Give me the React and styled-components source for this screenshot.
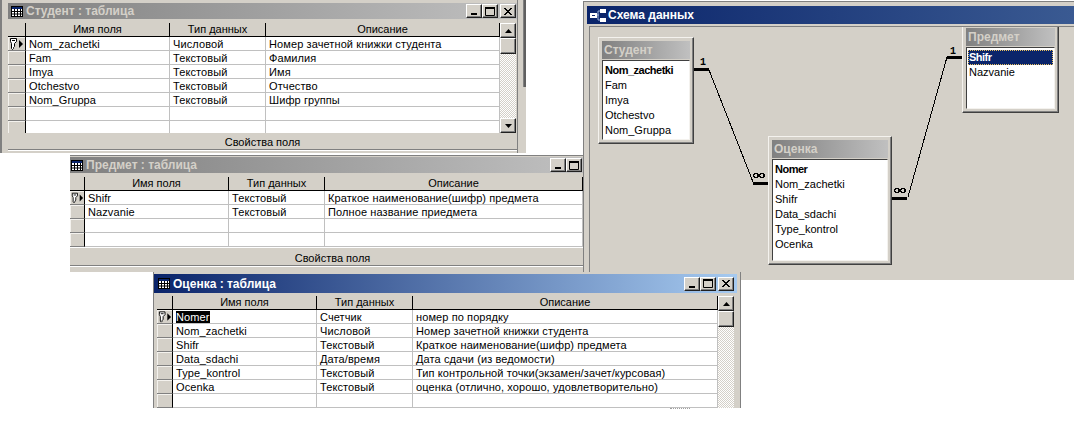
import styled, { createGlobalStyle } from "styled-components";

const GlobalStyle = createGlobalStyle`
  html, body {
    margin: 0;
    padding: 0;
    background: #fff;
  }
  body {
    width: 1074px;
    height: 425px;
    overflow: hidden;
    font-family: "Liberation Sans", Arial, sans-serif;
    font-size: 11px;
    color: #000;
  }
`;

const FACE = "#d4d0c8";

const student = [
  ["Nom_zachetki", "Числовой", "Номер зачетной книжки студента"],
  ["Fam", "Текстовый", "Фамилия"],
  ["Imya", "Текстовый", "Имя"],
  ["Otchestvo", "Текстовый", "Отчество"],
  ["Nom_Gruppa", "Текстовый", "Шифр группы"],
  ["", "", ""],
  ["", "", ""],
];

const predmet = [
  ["Shifr", "Текстовый", "Краткое наименование(шифр) предмета"],
  ["Nazvanie", "Текстовый", "Полное название приедмета"],
  ["", "", ""],
  ["", "", ""],
];

const ocenka = [
  ["Nomer", "Счетчик", "номер по порядку"],
  ["Nom_zachetki", "Числовой", "Номер зачетной книжки студента"],
  ["Shifr", "Текстовый", "Краткое наименование(шифр) предмета"],
  ["Data_sdachi", "Дата/время", "Дата сдачи (из ведомости)"],
  ["Type_kontrol", "Текстовый", "Тип контрольной точки(экзамен/зачет/курсовая)"],
  ["Ocenka", "Текстовый", "оценка (отлично, хорошо, удовлетворительно)"],
  ["", "", ""],
];

const Desktop = styled.div`
  position: relative;
  width: 1074px;
  height: 425px;
  overflow: hidden;
  background: #fff;
`;

const Window = styled.div`
  position: absolute;
  left: ${(p) => p.$x}px;
  top: ${(p) => p.$y}px;
  width: ${(p) => p.$w}px;
  height: ${(p) => p.$h}px;
  box-sizing: border-box;
  padding: ${(p) => p.$pad};
  background: ${FACE};
  border: 0 solid #808080;
  border-width: ${(p) => p.$edge || "0"};
  display: flex;
  flex-direction: column;
  overflow: hidden;
  z-index: ${(p) => p.$z};
`;

const TitleBar = styled.div`
  height: ${(p) => p.$h}px;
  flex: none;
  display: flex;
  align-items: center;
  padding-left: ${(p) => p.$left}px;
  gap: 3px;
  background: ${(p) =>
    p.$active
      ? "linear-gradient(90deg, #0a246a, #a6caf0)"
      : "linear-gradient(90deg, #808080, #c0c0c0)"};
`;

const TitleText = styled.span`
  flex: 1;
  font-weight: bold;
  font-size: 12px;
  white-space: nowrap;
  color: ${(p) => (p.$active ? "#fff" : FACE)};
`;

const CaptionButton = styled.div`
  width: 16px;
  height: 14px;
  flex: none;
  box-sizing: border-box;
  background: ${FACE};
  border: 1px solid;
  border-color: #fff #202020 #202020 #fff;
  box-shadow: inset -1px -1px #808080;
  display: flex;
  align-items: center;
  justify-content: center;
`;

const Buttons = styled.div`
  display: flex;
  flex: none;
  margin-right: ${(p) => p.$right}px;
`;

const CloseButton = styled(CaptionButton)`
  margin-left: 2px;
`;

const GridArea = styled.div`
  display: flex;
  flex: none;
  margin: ${(p) => p.$top}px ${(p) => p.$right || 0}px 0 ${(p) => p.$left || 0}px;
  height: ${(p) => p.$h}px;
  overflow: hidden;
`;

const Sheet = styled.div`
  flex: 1;
  min-width: 0;
  background: #fff;
  overflow: hidden;
`;

const Row = styled.div`
  display: grid;
  grid-template-columns: ${(p) => p.$cols};
  height: 14px;
`;

const HeaderCell = styled.div`
  box-sizing: border-box;
  background: ${FACE};
  border-right: 1px solid #000;
  border-bottom: 1px solid #000;
  text-align: center;
  line-height: 13px;
  white-space: nowrap;
  overflow: hidden;
`;

const Selector = styled.div`
  box-sizing: border-box;
  background: ${FACE};
  border-right: 1px solid #000;
  border-bottom: 1px solid #808080;
  box-shadow: inset 1px 1px #f4f2ee;
  display: flex;
  align-items: center;
  justify-content: flex-start;
  padding-left: 1px;
`;

const Cell = styled.div`
  box-sizing: border-box;
  background: #fff;
  border-right: 1px solid #c0c0c0;
  border-bottom: 1px solid #c0c0c0;
  padding-left: 3px;
  line-height: 15px;
  letter-spacing: 0.1px;
  white-space: nowrap;
  overflow: hidden;
`;

const Picked = styled.span`
  background: #000;
  color: #fff;
`;

const Scrollbar = styled.div`
  width: 16px;
  flex: none;
  display: flex;
  flex-direction: column;
`;

const ScrollButton = styled.div`
  height: 15px;
  flex: none;
  box-sizing: border-box;
  background: ${FACE};
  border: 1px solid;
  border-color: #fff #202020 #202020 #fff;
  box-shadow: inset -1px -1px #808080;
  display: flex;
  align-items: center;
  justify-content: center;
`;

const Thumb = styled(ScrollButton)`
  height: 16px;
`;

const Track = styled.div`
  flex: 1;
  background: repeating-conic-gradient(#d4d0c8 0 25%, #fff 0 50%) 0 0 / 2px 2px;
`;

const PropsBand = styled.div`
  height: 15px;
  flex: none;
  margin-top: ${(p) => p.$top}px;
  padding-left: ${(p) => p.$shift || 0}px;
  border-bottom: 1px solid #808080;
  box-shadow: 0 1px #fff;
  text-align: center;
  line-height: 17px;
`;

const SchemaTitle = styled.div`
  height: 18px;
  margin-top: 4px;
  flex: none;
  display: flex;
  align-items: center;
  gap: 2px;
  padding-left: 3px;
  background: linear-gradient(90deg, #0a246a, #3a5a92);
`;

const Canvas = styled.div`
  position: relative;
  flex: 1;
  margin: 2px 0 0 2px;
  border-top: 1px solid #808080;
  border-left: 1px solid #808080;
  overflow: hidden;
`;

const Relations = styled.svg`
  position: absolute;
  left: 0;
  top: 0;
  width: 100%;
  height: 100%;
`;

const TableCard = styled.div`
  position: absolute;
  left: ${(p) => p.$x}px;
  top: ${(p) => p.$y}px;
  width: ${(p) => p.$w}px;
  height: ${(p) => p.$h}px;
  box-sizing: border-box;
  padding: 3px;
  background: ${FACE};
  border: 1px solid;
  border-color: #f4f2ee #404040 #404040 #f4f2ee;
  box-shadow: inset -1px -1px #808080;
  display: flex;
  flex-direction: column;
`;

const CardTitle = styled.div`
  height: 18px;
  flex: none;
  padding-left: 2px;
  font-weight: bold;
  font-size: 12px;
  line-height: 18px;
  color: ${FACE};
  background: linear-gradient(90deg, #808080, #c0c0c0);
`;

const FieldList = styled.div`
  flex: 1;
  margin-top: 1px;
  background: #fff;
  border: 1px solid;
  border-color: #404040 #f4f2ee #f4f2ee #404040;
  padding: 2px 1px 0;
`;

const Field = styled.div`
  height: 15px;
  line-height: 15px;
  padding-left: 1px;
  white-space: nowrap;
  font-weight: ${(p) => (p.$pk ? "bold" : "normal")};
  letter-spacing: ${(p) => (p.$pk ? "-0.5px" : "0")};
  background: ${(p) => (p.$picked ? "#0a246a" : "transparent")};
  color: ${(p) => (p.$picked ? "#fff" : "#000")};
  ${(p) => (p.$picked ? "outline: 1px dotted #e8c060; outline-offset: -1px;" : "")}
`;

const Remnant = styled.div`
  position: absolute;
  left: 518px;
  top: 0;
  width: 8px;
  height: 153px;
  background: ${FACE};
  display: flex;
  justify-content: flex-end;
  align-items: flex-start;
`;

const DarkEdge = styled.div`
  width: 3px;
  height: 87px;
  box-sizing: border-box;
  background: #606060;
  border-left: 1px solid #808080;
`;

const Dots = styled.div`
  position: absolute;
  left: 670px;
  top: 408px;
  width: 20px;
  border-top: 1px dotted #a0a0a0;
`;

const TableIcon = () => (
  <svg width="12" height="11" viewBox="0 0 12 11">
    <rect x="0.5" y="0.5" width="11" height="10" fill="#fff" stroke="#000" />
    <rect x="1" y="1" width="10" height="2" fill="#0a246a" />
    <path d="M3.5 3v7M6.5 3v7M9.5 3v7M1 5.5h10M1 8h10" stroke="#000" strokeWidth="1" />
  </svg>
);

const SchemaIcon = () => (
  <svg width="16" height="14" viewBox="0 0 16 14">
    <rect x="0" y="5" width="7" height="5" fill="#fff" />
    <rect x="2" y="7" width="3" height="1" fill="#0a246a" />
    <rect x="10" y="1" width="6" height="4" fill="#fff" />
    <rect x="10" y="10" width="6" height="4" fill="#fff" />
    <path d="M7 7h2M8 3v9M8 3h2M8 12h2" stroke="#9fb4d8" fill="none" />
  </svg>
);

const KeyMark = () => (
  <svg width="15" height="12" viewBox="0 0 15 12">
    <path
      d="M1.5 0.5h6v3l-2 2v3l-1 1v1l-1 1-1-1v-5l-1-2z"
      fill="#fff"
      stroke="#000"
    />
    <rect x="3" y="2" width="3" height="1" fill="#000" />
    <path d="M10 2l4 4-4 4z" fill="#000" />
  </svg>
);

const MinGlyph = () => (
  <svg width="8" height="8" viewBox="0 0 8 8">
    <rect x="1" y="6" width="6" height="2" fill="#000" />
  </svg>
);

const MaxGlyph = () => (
  <svg width="10" height="9" viewBox="0 0 10 9">
    <path d="M0.5 1.5h9v7h-9z" fill="none" stroke="#000" />
    <rect x="0" y="0" width="10" height="2" fill="#000" />
  </svg>
);

const CloseGlyph = () => (
  <svg width="8" height="7" viewBox="0 0 8 7">
    <path d="M0 0l7 7M1 0l7 7M7 0L0 7M8 0L1 7" stroke="#000" fill="none" />
  </svg>
);

const Arrow = ({ down }) => (
  <svg width="7" height="4" viewBox="0 0 7 4">
    <path d={down ? "M0 0h7L3.5 4z" : "M3.5 0L7 4H0z"} fill="#000" />
  </svg>
);

const DesignGrid = ({ cols, rows, pickFirst }) => (
  <Sheet>
    <Row $cols={cols}>
      <HeaderCell />
      <HeaderCell>Имя поля</HeaderCell>
      <HeaderCell>Тип данных</HeaderCell>
      <HeaderCell>Описание</HeaderCell>
    </Row>
    {rows.map((row, i) => (
      <Row $cols={cols} key={i}>
        <Selector>{i === 0 && <KeyMark />}</Selector>
        {row.map((text, j) => (
          <Cell key={j}>
            {pickFirst && i === 0 && j === 0 ? <Picked>{text}</Picked> : text}
          </Cell>
        ))}
      </Row>
    ))}
  </Sheet>
);

const VScroll = ({ noDown }) => (
  <Scrollbar>
    <ScrollButton>
      <Arrow />
    </ScrollButton>
    <Thumb />
    <Track />
    {!noDown && (
      <ScrollButton>
        <Arrow down />
      </ScrollButton>
    )}
  </Scrollbar>
);

const Card = ({ x, y, w, h, title, fields, pk, picked }) => (
  <TableCard $x={x} $y={y} $w={w} $h={h}>
    <CardTitle>{title}</CardTitle>
    <FieldList>
      {fields.map((f, i) => (
        <Field key={f} $pk={f === pk} $picked={i === picked}>
          {f}
        </Field>
      ))}
    </FieldList>
  </TableCard>
);

const ManySign = ({ x, y }) => (
  <g transform={`translate(${x} ${y})`} fill="none" stroke="#000" strokeWidth="1.4">
    <circle cx="3" cy="2.5" r="2.2" />
    <circle cx="9" cy="2.5" r="2.2" />
  </g>
);

const OneSign = ({ x, y }) => (
  <text x={x} y={y} fontSize="10" fontWeight="bold" textAnchor="middle" fontFamily="Liberation Mono">
    1
  </text>
);

export default function App() {
  return (
    <Desktop>
      <GlobalStyle />
      <Remnant>
        <DarkEdge />
      </Remnant>
      <Dots />

      <Window $x={0} $y={0} $w={518} $h={153} $edge="0 1px 0 2px" $pad="3px 0 0 6px" $z={1}>
        <TitleBar $h={16} $left={3}>
          <TableIcon />
          <TitleText>Студент : таблица</TitleText>
          <Buttons $right={1}>
            <CaptionButton>
              <MinGlyph />
            </CaptionButton>
            <CaptionButton>
              <MaxGlyph />
            </CaptionButton>
            <CloseButton>
              <CloseGlyph />
            </CloseButton>
          </Buttons>
        </TitleBar>
        <GridArea $top={4} $right={1} $h={110}>
          <DesignGrid cols="18px 144px 96px 1fr" rows={student} />
          <VScroll />
        </GridArea>
        <PropsBand $top={1}>Свойства поля</PropsBand>
      </Window>

      <Window $x={70} $y={155} $w={513} $h={117} $edge="1px 0 0 0" $pad="1px 0 0 0" $z={2}>
        <TitleBar $h={16} $left={1}>
          <TableIcon />
          <TitleText>Предмет : таблица</TitleText>
          <Buttons $right={1}>
            <CaptionButton>
              <MinGlyph />
            </CaptionButton>
            <CaptionButton>
              <MaxGlyph />
            </CaptionButton>
          </Buttons>
        </TitleBar>
        <GridArea $top={4} $h={71}>
          <DesignGrid cols="15px 144px 96px 1fr" rows={predmet} />
        </GridArea>
        <PropsBand $top={2} $shift={12}>
          Свойства поля
        </PropsBand>
      </Window>

      <Window $x={153} $y={272} $w={588} $h={136} $edge="0 1px 0 1px" $pad="2px 3px 0 0" $z={3}>
        <TitleBar $h={19} $left={4} $active>
          <TableIcon />
          <TitleText $active>Оценка : таблица</TitleText>
          <Buttons $right={3}>
            <CaptionButton>
              <MinGlyph />
            </CaptionButton>
            <CaptionButton>
              <MaxGlyph />
            </CaptionButton>
            <CloseButton>
              <CloseGlyph />
            </CloseButton>
          </Buttons>
        </TitleBar>
        <GridArea $top={3} $left={3} $right={3} $h={112}>
          <DesignGrid cols="16px 144px 96px 1fr" rows={ocenka} pickFirst />
          <VScroll noDown />
        </GridArea>
      </Window>

      <Window $x={583} $y={1} $w={491} $h={279} $edge="1px 0 0 1px" $pad="0 0 0 3px" $z={2}>
        <SchemaTitle>
          <SchemaIcon />
          <TitleText $active>Схема данных</TitleText>
        </SchemaTitle>
        <Canvas>
          <Relations shapeRendering="crispEdges">
            <path d="M104 41h15v3h-15z" fill="#000" />
            <path d="M119 43L163 155" stroke="#000" fill="none" />
            <path d="M163 155h15v3h-15z" fill="#000" />
            <path d="M302 170h15v3h-15z" fill="#000" />
            <path d="M318 170L357 30" stroke="#000" fill="none" />
            <path d="M357 29h15v3h-15z" fill="#000" />
            <OneSign x={113} y={38} />
            <OneSign x={363} y={27} />
            <ManySign x={163} y={146} />
            <ManySign x={304} y={161} />
          </Relations>
          <Card
            x={8}
            y={10}
            w={96}
            h={107}
            title="Студент"
            fields={["Nom_zachetki", "Fam", "Imya", "Otchestvo", "Nom_Gruppa"]}
            pk="Nom_zachetki"
          />
          <Card
            x={178}
            y={109}
            w={124}
            h={129}
            title="Оценка"
            fields={["Nomer", "Nom_zachetki", "Shifr", "Data_sdachi", "Type_kontrol", "Ocenka"]}
            pk="Nomer"
          />
          <Card
            x={372}
            y={-3}
            w={97}
            h={89}
            title="Предмет"
            fields={["Shifr", "Nazvanie"]}
            pk="Shifr"
            picked={0}
          />
        </Canvas>
      </Window>
    </Desktop>
  );
}
